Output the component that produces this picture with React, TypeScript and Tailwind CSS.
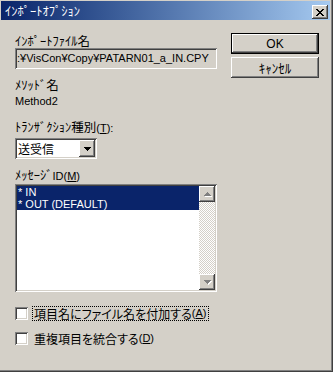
import React from 'react'

const raised =
  'shadow-[inset_-1px_-1px_#404040,inset_1px_1px_#ffffff,inset_-2px_-2px_#808080,inset_2px_2px_#d4d0c8]'
const sunken =
  'shadow-[inset_1px_1px_#808080,inset_-1px_-1px_#ffffff,inset_2px_2px_#404040,inset_-2px_-2px_#d4d0c8]'
const latin = "font-['Liberation_Sans',sans-serif] text-[11px]"

function Arrow({ down, color = '#000000' }: { down?: boolean; color?: string }) {
  return (
    <svg width="7" height="4" viewBox="0 0 7 4" className="block">
      {down ? (
        <path d="M0 0h7v1H6v1H5v1H4v1H3V3H2V2H1V1H0z" fill={color} />
      ) : (
        <path d="M3 0h1v1h1v1h1v1h1v1H0V3h1V2h1V1h1z" fill={color} />
      )}
    </svg>
  )
}

function ScrollButton({ down }: { down?: boolean }) {
  return (
    <div className={`w-[16px] h-[16px] bg-[#d4d0c8] ${raised} flex items-center justify-center`}>
      <div className="relative">
        <div className="absolute left-px top-px">
          <Arrow down={down} color="#ffffff" />
        </div>
        <div className="relative">
          <Arrow down={down} color="#808080" />
        </div>
      </div>
    </div>
  )
}

function CheckRow({ label, hot, focused }: { label: string; hot: string; focused?: boolean }) {
  return (
    <div className="flex items-center h-[15px]">
      <div className={`w-[13px] h-[13px] shrink-0 bg-white ${sunken}`} />
      <div
        className={`ml-[4px] h-[15px] px-[1px] flex items-center leading-[13px] whitespace-nowrap [font-feature-settings:'palt'] border ${
          focused ? 'border-dotted border-black' : 'border-transparent'
        }`}
      >
        {label}
        <span className={latin}>
          (<span className="underline underline-offset-1">{hot}</span>)
        </span>
      </div>
    </div>
  )
}

export default function App() {
  return (
    <div className="w-[333px] h-[372px] bg-[#404040] pr-px pb-px font-['Noto_Sans_CJK_JP',sans-serif] text-[12px] text-black">
      <div className="h-full bg-[#808080] pr-px pb-px">
        <div className="h-full bg-[#d4d0c8] pt-px pl-px pr-px flex flex-col">
          {/* title bar */}
          <div className="h-[19px] bg-linear-to-r from-[#0a246a] to-[#a6caf0] flex items-start">
            <div className="pl-[4px] pt-[3px] leading-[13px] text-[12.5px] text-white flex-1">ｲﾝﾎﾟｰﾄｵﾌﾟｼｮﾝ</div>
            <div
              className={`mt-[4px] mr-[2px] w-[16px] h-[14px] bg-[#d4d0c8] ${raised} flex items-center justify-center`}
            >
              <svg width="8" height="7" viewBox="0 0 8 7" className="block">
                <path
                  d="M0 0h2v1h1v1h2V1h1V0h2v1H7v1H6v1H5v1h1v1h1v1h1v1H6V6H5V5H3v1H2v1H0V6h1V5h1V4h1V3H2V2H1V1H0z"
                  fill="#000000"
                />
              </svg>
            </div>
          </div>

          {/* body */}
          <div className="flex pl-[14px]">
            <div className="w-[202px] flex flex-col">
              <div className="mt-[15px] h-[12px] leading-[12px] text-[12.5px]">ｲﾝﾎﾟｰﾄﾌｧｲﾙ名</div>
              <div
                className={`mt-[1px] h-[21px] bg-[#d4d0c8] ${sunken} px-[2px] flex items-center overflow-hidden whitespace-nowrap ${latin}`}
              >
                :¥VisCon¥Copy¥PATARN01_a_IN.CPY
              </div>

              <div className="mt-[10px] h-[12px] leading-[12px] text-[12.5px]">ﾒｿｯﾄﾞ名</div>
              <div className={`mt-[4px] h-[12px] leading-[12px] ${latin}`}>Method2</div>

              <div className="mt-[14px] h-[12px] leading-[12px] text-[12.5px]">
                ﾄﾗﾝｻﾞｸｼｮﾝ種別<span className={latin}>(<span className="underline underline-offset-1">T</span>):</span>
              </div>
              <div className={`mt-[5px] w-[82px] h-[21px] bg-white ${sunken} p-[2px] flex`}>
                <div className="flex-1 pl-[1px] leading-[17px]">送受信</div>
                <div className={`w-[16px] h-[17px] bg-[#d4d0c8] ${raised} flex items-center justify-center`}>
                  <Arrow down />
                </div>
              </div>

              <div className="mt-[10px] h-[12px] leading-[12px] text-[12.5px]">
                ﾒｯｾｰｼﾞ<span className={latin}>ID(<span className="underline underline-offset-1">M</span>)</span>
              </div>
              <div className={`mt-[3px] h-[108px] bg-white ${sunken} p-[2px] flex`}>
                <div className={`flex-1 flex flex-col ${latin}`}>
                  <div className="h-[12px] leading-[12px] bg-[#0a246a] text-white pl-[1px] whitespace-nowrap">* IN</div>
                  <div className="h-[12px] leading-[12px] bg-[#0a246a] text-white pl-[1px] whitespace-nowrap">
                    * OUT (DEFAULT)
                  </div>
                </div>
                <div className="w-[16px] flex flex-col">
                  <ScrollButton />
                  <div className="flex-1 bg-[image:repeating-conic-gradient(#d4d0c8_0_25%,#ffffff_0_50%)] bg-[length:2px_2px]" />
                  <ScrollButton down />
                </div>
              </div>

              <div className="mt-[14px]">
                <CheckRow label="項目名にファイル名を付加する" hot="A" focused />
              </div>
              <div className="mt-[10px]">
                <CheckRow label="重複項目を統合する" hot="D" />
              </div>
            </div>

            <div className="ml-[14px] w-[88px] flex flex-col">
              <div className="mt-[13px] h-[21px] bg-black p-px">
                <div
                  className={`h-full bg-[#d4d0c8] ${raised} flex items-center justify-center leading-[12px] font-['Liberation_Sans',sans-serif] text-[12px]`}
                >
                  OK
                </div>
              </div>
              <div
                className={`mt-[3px] h-[21px] bg-[#d4d0c8] ${raised} flex items-center justify-center leading-[12px] text-[13px]`}
              >
                ｷｬﾝｾﾙ
              </div>
            </div>
          </div>
        </div>
      </div>
    </div>
  )
}
